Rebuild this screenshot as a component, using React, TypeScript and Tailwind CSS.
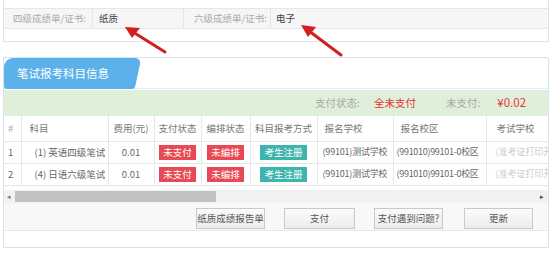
import React from "react";

const font = { fontFamily: '"Noto Sans CJK SC", "Noto Sans", sans-serif' };

function Badge({ text, color }: { text: string; color: string }) {
  return (
    <span className={`inline-block px-[4px] h-[15px] leading-[15px] text-[9.5px] text-white whitespace-nowrap ${color}`}>{text}</span>
  );
}

function Btn({ text, w }: { text: string; w: string }) {
  return (
    <button
      className={`${w} h-[21px] px-0 border border-[#c9c9c9] bg-gradient-to-b from-[#fbfbfb] to-[#ececec] text-[9.5px] text-[#555] leading-none whitespace-nowrap`}
    >
      {text}
    </button>
  );
}

const rows = [
  { n: "1", name: "(1) 英语四级笔试" },
  { n: "2", name: "(4) 日语六级笔试" },
];

const th = "font-normal border border-t-0 border-[#e6e6e6] whitespace-nowrap overflow-hidden";
const td = "border border-[#e6e6e6] whitespace-nowrap overflow-hidden";

export default function App() {
  return (
    <div className="relative w-[554px] h-[253px] bg-white overflow-hidden text-[#666]" style={font}>
      {/* top panel */}
      <div className="ml-[3px] w-[546px] h-[42px] border border-t-0 border-[#dbe5ee] pt-[8px]">
        <div className="flex h-[21px] border-y border-[#e6e6e6] bg-[#f6f6f6] text-[9.5px] leading-[19px] whitespace-nowrap">
          <div className="w-[89px] pl-[9px] text-[#aaa] border-r border-[#e6e6e6]">四级成绩单/证书:</div>
          <div className="w-[91px] pl-[6px] text-[#444] border-r border-[#e6e6e6]">纸质</div>
          <div className="w-[87px] pl-[10px] text-[#aaa] border-r border-[#e6e6e6]">六级成绩单/证书:</div>
          <div className="flex-1 pl-[5px] text-[#444]">电子</div>
        </div>
      </div>

      {/* second panel */}
      <div className="mt-[15px] ml-[3px] w-[546px] h-[191px] border border-[#d6e3ee] rounded-tr-[3px] flex flex-col">
        <div className="flex h-[31px] border-b border-[#e3ecf3]">
          <div className="flex">
            <div className="w-[128px] h-[31px] bg-[#5db1eb] rounded-tl-[9px] rounded-bl-[3px] pl-[13px] text-white text-[11.5px] leading-[31px] whitespace-nowrap">
              笔试报考科目信息
            </div>
            <div className="w-[10px] h-[31px] bg-[#5db1eb] -skew-x-12 -ml-[4px] rounded-tr-[6px] rounded-br-[3px]" />
          </div>
        </div>
        <div className="mt-[1px] h-[26px] bg-[#e0efd9] flex items-center text-[10.5px] whitespace-nowrap">
          <span className="ml-[311px] text-[#a8a8a8]">支付状态:</span>
          <span className="ml-[14px] text-[#e52f2f]">全未支付</span>
          <span className="ml-[30px] text-[#a8a8a8]">未支付:</span>
          <span className="ml-[17px] text-[#e5393b] text-[11.5px]">¥0.02</span>
        </div>
        <div className="overflow-hidden">
          <table className="border-collapse text-[9.5px] table-fixed w-[600px]">
            <colgroup>
              <col className="w-[17px]" />
              <col className="w-[87px]" />
              <col className="w-[46px]" />
              <col className="w-[47px]" />
              <col className="w-[49px]" />
              <col className="w-[67px]" />
              <col className="w-[76px]" />
              <col className="w-[93px]" />
              <col className="w-[118px]" />
            </colgroup>
            <thead>
              <tr className="h-[25px] text-[#777]">
                <th className="font-normal text-left pl-[4px] border-b border-r border-[#e6e6e6] text-[#aaa]">#</th>
                <th className={`${th} text-left pl-[8px]`}>科目</th>
                <th className={`${th} text-center`}>费用(元)</th>
                <th className={`${th} text-center`}>支付状态</th>
                <th className={`${th} text-center`}>编排状态</th>
                <th className={`${th} text-center`}>科目报考方式</th>
                <th className={`${th} text-left pl-[7px]`}>报名学校</th>
                <th className={`${th} text-left pl-[7px]`}>报名校区</th>
                <th className={`${th} text-left pl-[10px]`}>考试学校</th>
              </tr>
            </thead>
            <tbody>
              {rows.map((r) => (
                <tr key={r.n} className="h-[22px] text-[#666]">
                  <td className="pl-[4px] border border-l-0 border-[#e6e6e6]">{r.n}</td>
                  <td className={`${td} pl-[13px]`}>{r.name}</td>
                  <td className={`${td} text-center`}>0.01</td>
                  <td className={`${td} text-center`}>
                    <Badge text="未支付" color="bg-[#e84a55]" />
                  </td>
                  <td className={`${td} text-center`}>
                    <Badge text="未编排" color="bg-[#e84a55]" />
                  </td>
                  <td className={`${td} text-center`}>
                    <Badge text="考生注册" color="bg-[#3db5ad]" />
                  </td>
                  <td className={`${td} pl-[5px] text-[9px] tracking-[-0.2px]`}>(99101)测试学校</td>
                  <td className={`${td} pl-[3px] text-[9px] tracking-[-0.3px]`}>(991010)99101-0校区</td>
                  <td className={`${td} pl-[9px] text-[#ccc] text-[9px]`}>(准考证打印开放)</td>
                </tr>
              ))}
            </tbody>
          </table>
        </div>
        {/* scrollbar */}
        <div className="mt-[4px] h-[13px] bg-[#f1f1f1] flex items-center">
          <span className="w-[10px] text-[7px] text-[#777] text-center leading-none">◂</span>
          <div className="ml-[1px] w-[201px] h-[11px] bg-[#c2c2c2]" />
          <div className="flex-1" />
          <span className="w-[12px] text-[7px] text-[#444] text-center leading-none">▸</span>
        </div>
        <div className="h-[28px] bg-[#f8f8f8] border-b border-[#e8e8e8] flex items-center">
          <div className="ml-[192px]">
            <Btn text="纸质成绩报告单" w="w-[69px]" />
          </div>
          <div className="ml-[19px]">
            <Btn text="支付" w="w-[71px]" />
          </div>
          <div className="ml-[19px]">
            <Btn text="支付遇到问题?" w="w-[69px]" />
          </div>
          <div className="ml-[21px]">
            <Btn text="更新" w="w-[69px]" />
          </div>
        </div>
      </div>

      {/* red arrows (annotation overlay) */}
      <svg className="absolute left-0 top-0" width="554" height="253" viewBox="0 0 554 253">
        <g stroke="#d21f1f" strokeWidth="3" strokeLinecap="round" fill="#d21f1f">
          <line x1="165" y1="52" x2="133" y2="32" />
          <polygon points="125,27 140,28 132,38" stroke="none" />
          <line x1="341" y1="55" x2="309" y2="31" />
          <polygon points="301,25 316,27 308,37" stroke="none" />
        </g>
      </svg>
    </div>
  );
}
